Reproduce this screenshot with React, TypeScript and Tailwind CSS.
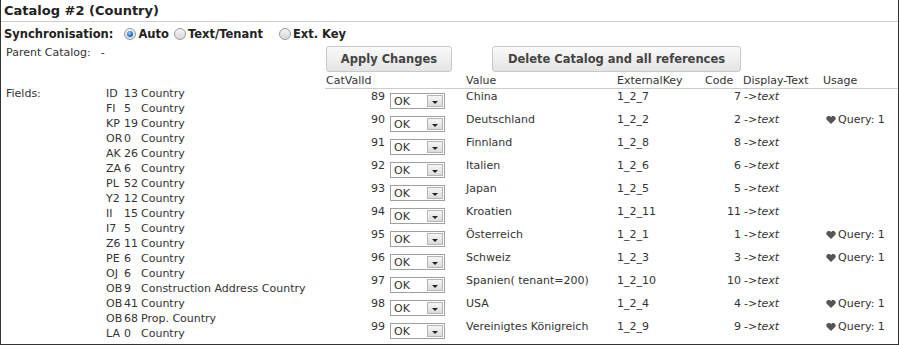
import React from "react";

type Field = { code: string; num: string; name: string };
type Row = {
  id: number;
  value: string;
  extKey: string;
  code: number;
  query?: boolean;
};

const fields: Field[] = [
  { code: "ID", num: "13", name: "Country" },
  { code: "FI", num: "5", name: "Country" },
  { code: "KP", num: "19", name: "Country" },
  { code: "OR", num: "0", name: "Country" },
  { code: "AK", num: "26", name: "Country" },
  { code: "ZA", num: "6", name: "Country" },
  { code: "PL", num: "52", name: "Country" },
  { code: "Y2", num: "12", name: "Country" },
  { code: "II", num: "15", name: "Country" },
  { code: "I7", num: "5", name: "Country" },
  { code: "Z6", num: "11", name: "Country" },
  { code: "PE", num: "6", name: "Country" },
  { code: "OJ", num: "6", name: "Country" },
  { code: "OB", num: "9", name: "Construction Address Country" },
  { code: "OB", num: "41", name: "Country" },
  { code: "OB", num: "68", name: "Prop. Country" },
  { code: "LA", num: "0", name: "Country" },
];

const rows: Row[] = [
  { id: 89, value: "China", extKey: "1_2_7", code: 7 },
  { id: 90, value: "Deutschland", extKey: "1_2_2", code: 2, query: true },
  { id: 91, value: "Finnland", extKey: "1_2_8", code: 8 },
  { id: 92, value: "Italien", extKey: "1_2_6", code: 6 },
  { id: 93, value: "Japan", extKey: "1_2_5", code: 5 },
  { id: 94, value: "Kroatien", extKey: "1_2_11", code: 11 },
  { id: 95, value: "Österreich", extKey: "1_2_1", code: 1, query: true },
  { id: 96, value: "Schweiz", extKey: "1_2_3", code: 3, query: true },
  { id: 97, value: "Spanien( tenant=200)", extKey: "1_2_10", code: 10 },
  { id: 98, value: "USA", extKey: "1_2_4", code: 4, query: true },
  { id: 99, value: "Vereinigtes Königreich", extKey: "1_2_9", code: 9, query: true },
];

const Radio = ({ checked }: { checked?: boolean }) => (
  <span className="inline-flex items-center justify-center w-[12px] h-[12px] rounded-full border border-[#9a9a9a] bg-gradient-to-b from-[#f4f4f4] to-[#d9d9d9]">
    {checked && (
      <span className="w-[6px] h-[6px] rounded-full bg-[radial-gradient(circle_at_40%_35%,#8fd3ff,#1b6fc2_60%,#0d4a8c)]" />
    )}
  </span>
);

const Heart = () => (
  <svg width="10" height="8" viewBox="0 0 10 8" className="shrink-0">
    <path
      d="M5 8 L0.7 3.7 A2.4 2.4 0 0 1 5 1.2 A2.4 2.4 0 0 1 9.3 3.7 Z"
      fill="#555"
    />
  </svg>
);

const SelectBox = () => (
  <div className="ml-[5px] mt-[4px] w-[55px] h-[16px] flex border border-[#a0a0a0] bg-white">
    <span className="flex-1 pl-[3px] pt-[2px] leading-[12px]">OK</span>
    <span className="w-[16px] m-px flex items-center justify-center border border-[#b5b5b5] bg-gradient-to-b from-[#f5f5f5] to-[#dcdcdc]">
      <span className="mt-[3px] w-0 h-0 border-l-[3px] border-r-[3px] border-t-[3px] border-l-transparent border-r-transparent border-t-[#222]" />
    </span>
  </div>
);

const Button = ({ label, className }: { label: string; className: string }) => (
  <button
    className={`h-[26px] rounded-[3px] border border-[#c8c8c8] bg-gradient-to-b from-[#fafafa] to-[#e4e4e4] font-bold text-[11.5px] text-[#444] ${className}`}
  >
    {label}
  </button>
);

const App = () => {
  return (
    <div className="w-[899px] h-[345px] border-x border-b border-[#333] bg-white font-['DejaVu_Sans',sans-serif] text-[11px] leading-[13px] text-[#333] overflow-hidden">
      <div className="h-[22px] pl-[3px] flex items-center border-b border-[#ccc] font-bold text-[13px] text-[#222]">
        Catalog #2 (Country)
      </div>

      <div className="h-[23px] pl-[3px] pt-[1px] flex items-center font-bold text-[11.5px] text-[#222]">
        <span className="mr-[11px]">Synchronisation:</span>
        <Radio checked />
        <span className="ml-[2px] mr-[5px]">Auto</span>
        <Radio />
        <span className="ml-[2px] mr-[16px]">Text/Tenant</span>
        <Radio />
        <span className="ml-[2px]">Ext. Key</span>
      </div>

      <div className="flex -mt-px">
        <div className="w-[324px] pl-[5px] pt-[1px] leading-[15px]">
          <div>
            Parent Catalog:<span className="ml-[10px]">-</span>
          </div>
          <div className="mt-[26px] flex">
            <div className="w-[100px]">Fields:</div>
            <div className="grid grid-cols-[18px_17px_auto]">
              {fields.map((f, i) => (
                <React.Fragment key={i}>
                  <span>{f.code}</span>
                  <span>{f.num}</span>
                  <span>{f.name}</span>
                </React.Fragment>
              ))}
            </div>
          </div>
        </div>

        <div className="flex-1">
          <div className="mt-[2px] flex">
            <Button label="Apply Changes" className="ml-[1px] w-[126px]" />
            <Button label="Delete Catalog and all references" className="ml-[40px] w-[249px]" />
          </div>

          <div className="grid grid-cols-[60px_81px_151px_88px_38px_80px_1fr] h-[17px] pt-[2px] border-b border-[#ccc]">
            <span className="col-span-2 pl-[1px]">CatValId</span>
            <span>Value</span>
            <span>ExternalKey</span>
            <span>Code</span>
            <span>Display-Text</span>
            <span>Usage</span>
          </div>

          {rows.map((r) => (
            <div
              key={r.id}
              className="grid grid-cols-[60px_81px_151px_88px_38px_80px_1fr] h-[23px]"
            >
              <span className="pt-[1px] text-right">{r.id}</span>
              <SelectBox />
              <span className="pt-[1px]">{r.value}</span>
              <span className="pt-[1px]">{r.extKey}</span>
              <span className="pt-[1px] pr-[2px] text-right">{r.code}</span>
              <span className="pt-[1px] pl-[1px]">
                -&gt;<i>text</i>
              </span>
              <span className="pt-[1px] pl-[3px]">
                {r.query && (
                  <span className="flex items-center gap-[2px]">
                    <Heart />
                    Query: 1
                  </span>
                )}
              </span>
            </div>
          ))}
        </div>
      </div>
    </div>
  );
};

export default App;
